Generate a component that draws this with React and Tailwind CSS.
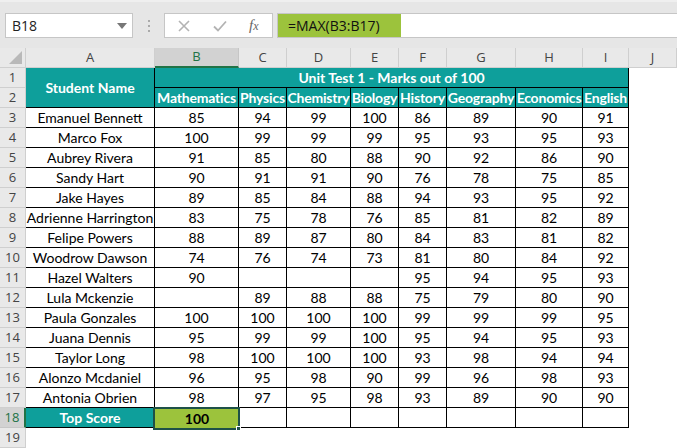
import React from "react";

const cols = ["A", "B", "C", "D", "E", "F", "G", "H", "I", "J"];
const subjects = ["Mathematics", "Physics", "Chemistry", "Biology", "History", "Geography", "Economics", "English"];
const data = [
  ["Emanuel Bennett", 85, 94, 99, 100, 86, 89, 90, 91],
  ["Marco Fox", 100, 99, 99, 99, 95, 93, 95, 93],
  ["Aubrey Rivera", 91, 85, 80, 88, 90, 92, 86, 90],
  ["Sandy Hart", 90, 91, 91, 90, 76, 78, 75, 85],
  ["Jake Hayes", 89, 85, 84, 88, 94, 93, 95, 92],
  ["Adrienne Harrington", 83, 75, 78, 76, 85, 81, 82, 89],
  ["Felipe Powers", 88, 89, 87, 80, 84, 83, 81, 82],
  ["Woodrow Dawson", 74, 76, 74, 73, 81, 80, 84, 92],
  ["Hazel Walters", 90, "", "", "", 95, 94, 95, 93],
  ["Lula Mckenzie", "", 89, 88, 88, 75, 79, 80, 90],
  ["Paula Gonzales", 100, 100, 100, 100, 99, 99, 99, 95],
  ["Juana Dennis", 95, 99, 99, 100, 95, 94, 95, 93],
  ["Taylor Long", 98, 100, 100, 100, 93, 98, 94, 94],
  ["Alonzo Mcdaniel", 96, 95, 98, 90, 99, 96, 98, 93],
  ["Antonia Obrien", 98, 97, 95, 98, 93, 89, 90, 90],
];

const cellFont = "font-['Lato','Liberation_Sans',sans-serif] text-[14px]";
const uiFont = "font-['Open_Sans','Liberation_Sans',sans-serif]";

function RowHeader({ n, selected }) {
  return (
    <div
      className={
        "flex items-center justify-center border-b border-r text-[13px] " +
        uiFont +
        (selected
          ? " bg-[#d2d2d2] border-b-[#c6c6c6] border-r-2 border-r-[#217346] text-[#217346]"
          : " bg-[#e9e9e9] border-[#cfcfcf] text-[#444]")
      }
    >
      {n}
    </div>
  );
}

export default function App() {
  return (
    <div className="w-[677px] h-[448px] overflow-hidden bg-white">
      {/* top bar */}
      <div className="h-[48px] bg-[#e6e6e6] border-t-[2px] border-[#efefef] flex items-start pt-[11px]">
        <div className={"ml-[5px] w-[128px] h-[25px] bg-white border border-[#c6c6c6] flex items-center pl-[6px] pr-[5px] text-[14px] text-[#222] " + uiFont}>
          <span className="flex-1">B18</span>
          <svg width="10" height="6" viewBox="0 0 10 6"><path d="M0 0h10L5 6z" fill="#777" /></svg>
        </div>
        <div className="w-[31px] h-[25px] flex flex-col items-center justify-center gap-[3px]">
          <span className="w-[2px] h-[2px] bg-[#aaa]" />
          <span className="w-[2px] h-[2px] bg-[#aaa]" />
          <span className="w-[2px] h-[2px] bg-[#aaa]" />
        </div>
        <div className="w-[109px] h-[25px] bg-white border border-[#c6c6c6] flex items-center">
          <svg className="ml-[13px]" width="12" height="12" viewBox="0 0 12 12"><path d="M1 1l10 10M11 1L1 11" stroke="#b3b3b3" strokeWidth="1.6" /></svg>
          <svg className="ml-[23px]" width="14" height="12" viewBox="0 0 14 12"><path d="M1 6.5l4 4L13 1.5" stroke="#b3b3b3" strokeWidth="1.8" fill="none" /></svg>
          <span className="ml-[22px] font-['Liberation_Serif',serif] italic text-[15px] text-[#666] leading-none">f<span className="text-[12px]">x</span></span>
        </div>
        <div className="ml-[4px] flex-1 h-[25px] bg-white border border-[#c6c6c6] border-r-0 flex">
          <div className={"w-[123px] h-full bg-[#9cc33c] flex items-center pl-[10px] text-[14px] text-[#111] " + uiFont}>=MAX(B3:B17)</div>
        </div>
      </div>

      {/* sheet grid */}
      <div className="grid grid-cols-[26px_129px_84px_48px_64px_48px_48px_69px_67px_46px_48px] grid-rows-[20px_repeat(19,20px)]">
        {/* corner */}
        <div className="bg-[#e9e9e9] border-r border-b border-[#cfcfcf] relative">
          <svg className="absolute right-[3px] bottom-[3px]" width="13" height="13" viewBox="0 0 13 13"><path d="M13 0v13H0z" fill="#b9b9b9" /></svg>
        </div>
        {cols.map((c) => (
          <div
            key={c}
            className={
              "flex items-center justify-center text-[13px] border-r " +
              uiFont +
              (c === "B"
                ? " bg-[#d2d2d2] border-r-[#c6c6c6] border-b-2 border-b-[#217346] text-[#217346]"
                : " bg-[#e9e9e9] border-b border-[#cfcfcf] text-[#444]")
            }
          >
            {c}
          </div>
        ))}

        {/* row 1 */}
        <RowHeader n={1} />
        <div className={"row-span-2 bg-[#0e9f9b] border-r border-b border-black flex items-center justify-center font-bold text-white " + cellFont}>
          Student Name
        </div>
        <div className={"col-span-8 bg-[#0e9f9b] border-r border-b border-black flex items-center justify-center font-bold text-white " + cellFont}>
          Unit Test 1 - Marks out of 100
        </div>
        <div />

        {/* row 2 */}
        <RowHeader n={2} />
        {subjects.map((s) => (
          <div key={s} className={"bg-[#0e9f9b] border-r border-b border-black flex items-center justify-center font-bold text-white whitespace-nowrap overflow-hidden tracking-[-0.2px] " + cellFont}>
            {s}
          </div>
        ))}
        <div />

        {data.map((row, i) => (
          <React.Fragment key={i}>
            <RowHeader n={i + 3} />
            {row.map((v, j) => (
              <div key={j} className={"border-r border-b border-black flex items-center justify-center text-black whitespace-nowrap " + cellFont}>
                {v}
              </div>
            ))}
            <div />
          </React.Fragment>
        ))}

        {/* row 18 */}
        <RowHeader n={18} selected />
        <div className={"bg-[#0e9f9b] border-r border-b border-black flex items-center justify-center font-bold text-white " + cellFont}>
          Top Score
        </div>
        <div className={"relative bg-[#9cc33c] flex items-center justify-center font-bold text-black " + cellFont}>
          <div className="absolute -left-[2px] -top-[1px] -right-[1px] -bottom-[2px] border-[2px] border-[#1e5148]" />
          <div className="absolute -right-[2px] -bottom-[3px] w-[5px] h-[5px] bg-[#1e5148] border border-white" />
          <span className="relative">100</span>
        </div>
        {[0, 1, 2, 3, 4, 5, 6].map((k) => (
          <div key={k} className="border-r border-b border-black" />
        ))}
        <div />

        {/* row 19 */}
        <RowHeader n={19} />
        <div className="col-span-10" />
      </div>
    </div>
  );
}
